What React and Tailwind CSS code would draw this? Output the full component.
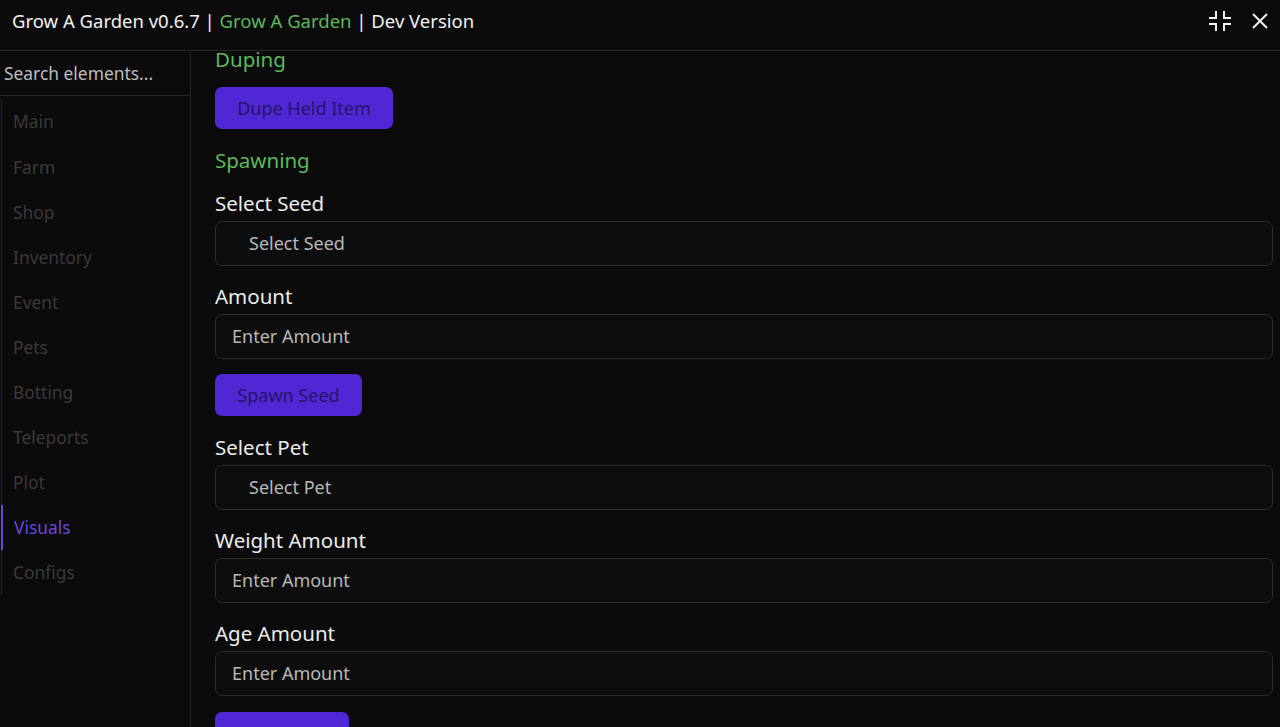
import React from "react";

const navItems = ["Main","Farm","Shop","Inventory","Event","Pets","Botting","Teleports","Plot","Visuals","Configs"];

function Label({ children, className = "" }) {
  return <div className={`shrink-0 text-[20.5px] leading-[24px] text-[#ececec] ${className}`}>{children}</div>;
}
function Box({ children, indent = false, className = "" }) {
  return (
    <div className={`shrink-0 h-[45px] w-full rounded-[7px] border border-[#2c2c2c] bg-[#0d0d0d] flex items-center text-[18px] text-[#b8b8b8] ${indent ? "pl-[33px]" : "pl-[16px]"} ${className}`}>
      {children}
    </div>
  );
}
function Btn({ children, w, className = "" }) {
  return (
    <div className={`shrink-0 h-[42px] rounded-[7px] bg-[#5027d4] flex items-center justify-center text-[18px] text-[#281469] ${w} ${className}`}>
      {children}
    </div>
  );
}

export default function App() {
  return (
    <div className="w-[1280px] h-[727px] overflow-hidden bg-[#0b0b0b] flex flex-col" style={{ fontFamily: '"Noto Sans", sans-serif' }}>
      <div className="relative z-10 h-[51px] shrink-0 border-b border-[#262626] flex items-center pl-[12px] pr-[12px] pb-[8px]">
        <div className="text-[18.5px] text-[#f2f2f2] whitespace-nowrap">
          Grow A Garden v0.6.7 | <span className="text-[#5cb85a]">Grow A Garden</span> | Dev Version
        </div>
        <div className="ml-auto flex items-center gap-[20px]">
          <svg width="24" height="20" viewBox="0 0 24 20" fill="none" stroke="#f2f2f2" strokeWidth="2">
            <path d="M1 7H8V0" />
            <path d="M23 7H16V0" />
            <path d="M1 13H8V20" />
            <path d="M23 13H16V20" />
          </svg>
          <svg width="16" height="16" viewBox="0 0 16 16" fill="none" stroke="#f2f2f2" strokeWidth="2">
            <path d="M1 1L15 15M15 1L1 15" />
          </svg>
        </div>
      </div>
      <div className="flex flex-1 min-h-0">
        <div className="w-[191px] shrink-0 border-r border-[#262626] flex flex-col">
          <div className="h-[45px] shrink-0 border-b border-[#262626] flex items-center pl-[4px] text-[17.4px] text-[#bdbdbd] whitespace-nowrap">
            Search elements...
          </div>
          <div className="mt-[3px] ml-[1px] border-l border-[#262626] flex flex-col">
            {navItems.map((n) => (
              <div
                key={n}
                className={`h-[45.1px] flex items-center text-[17.4px] ${n === "Visuals" ? "text-[#6a45df] border-l-2 border-[#6a45df] -ml-[1px] pl-[11px]" : "pl-[11px] text-[#3a3a3a]"}`}
              >
                {n}
              </div>
            ))}
          </div>
        </div>
        <div className="flex-1 min-w-0 pl-[24px] pr-[7px] flex flex-col">
          <div className="shrink-0 text-[20.5px] leading-[20px] -mt-[2px] text-[#5cb85a]">Duping</div>
          <Btn w="w-[178px]" className="mt-[18px]">Dupe Held Item</Btn>
          <div className="shrink-0 mt-[19px] text-[20.5px] leading-[24px] text-[#5cb85a]">Spawning</div>
          <Label className="mt-[19px]">Select Seed</Label>
          <Box indent className="mt-[6px]">Select Seed</Box>
          <Label className="mt-[18px]">Amount</Label>
          <Box className="mt-[6px]">Enter Amount</Box>
          <Btn w="w-[147px]" className="mt-[15px]">Spawn Seed</Btn>
          <Label className="mt-[19px]">Select Pet</Label>
          <Box indent className="mt-[6px]">Select Pet</Box>
          <Label className="mt-[18px]">Weight Amount</Label>
          <Box className="mt-[6px]">Enter Amount</Box>
          <Label className="mt-[18px]">Age Amount</Label>
          <Box className="mt-[6px]">Enter Amount</Box>
          <Btn w="w-[134px]" className="mt-[16px]">&nbsp;</Btn>
        </div>
      </div>
    </div>
  );
}
